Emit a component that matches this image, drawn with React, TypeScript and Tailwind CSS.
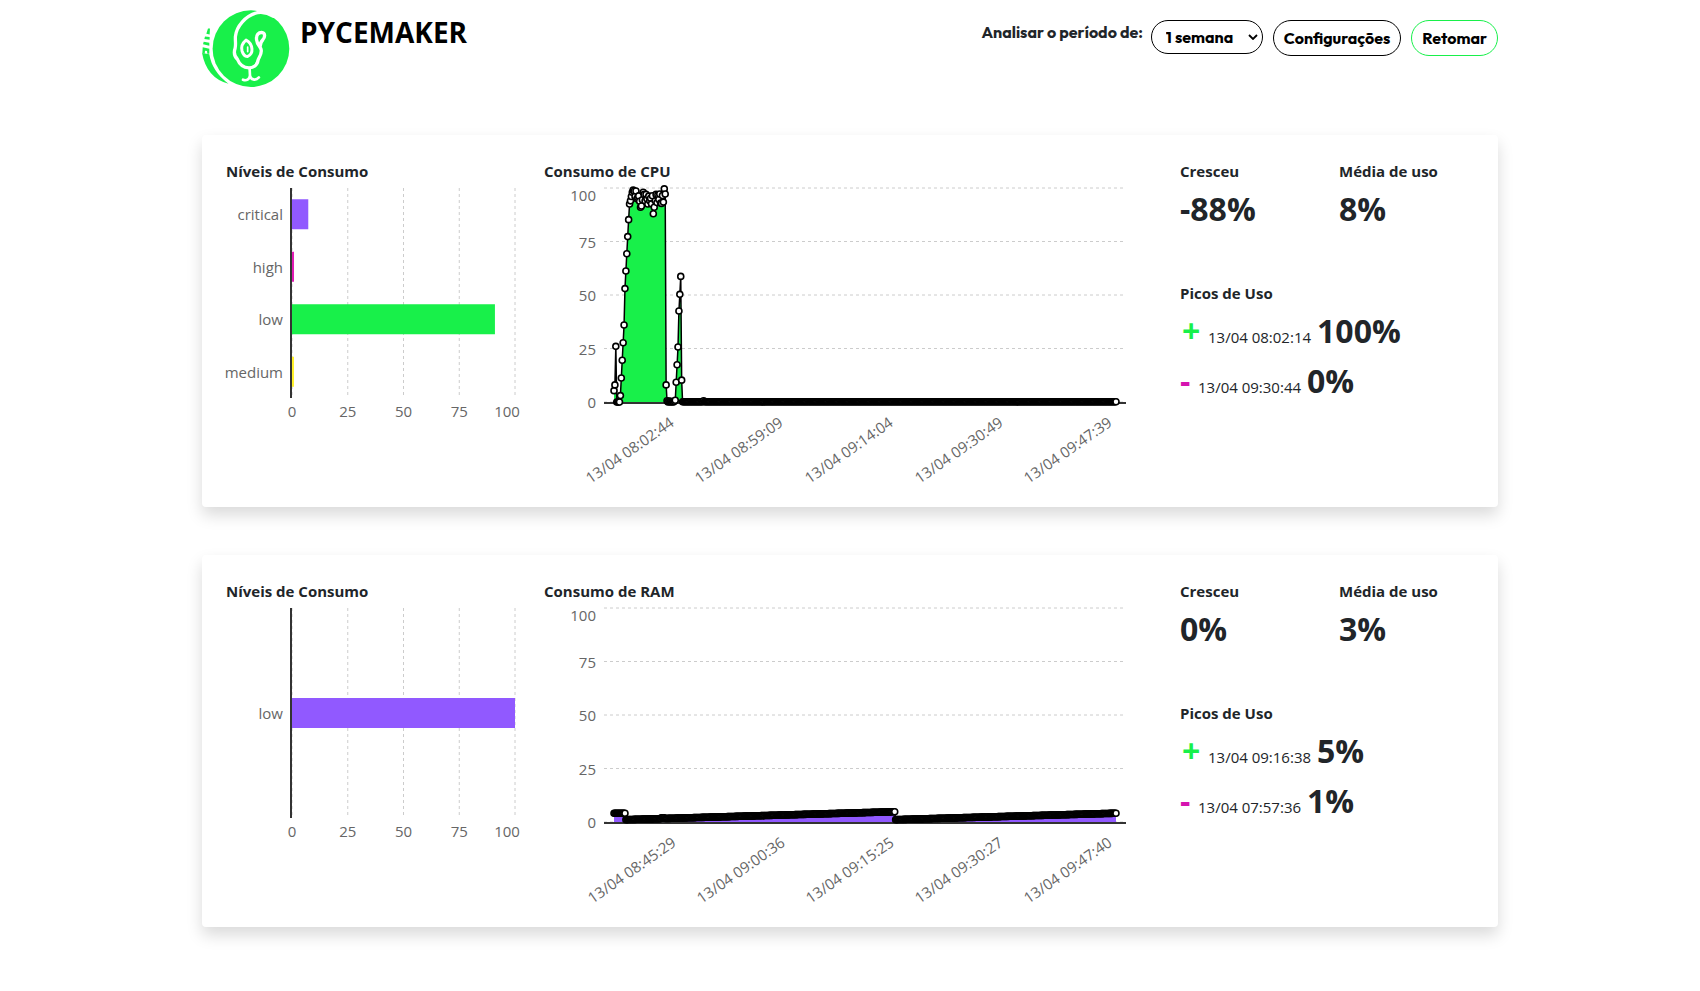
import React from "react";

type Point = [number, number];

interface Bar {
  label: string;
  value: number;
  color: string;
}

interface Resource {
  title: string;
  color: string;
  levels: Bar[];
  points: Point[];
  ticks: { label: string; x: number }[];
  growth: string;
  average: string;
  max: { at: string; value: string };
  min: { at: string; value: string };
}

const FIRST_X = 70;
const LAST_X = 572;
const ZERO_Y = 219;
const PLOT_HEIGHT = 214;
const SAMPLES = 550;

const sampleX = (i: number) => FIRST_X + ((LAST_X - FIRST_X) * i) / (SAMPLES - 1);

const cpuStart = [
  5.3, 8, 26, 0, 0, 0, 0, 3, 11.2, 19.5, 27.7, 36, 53, 61.2, 69.3, 77.3,
  85.2, 92.5, 94, 96, 98, 99, 98.5, 96, 98.6, 95, 95.5, 96.3, 93.8, 91, 91.6,
  94.5, 98, 97, 94, 97, 95, 92.5, 96.2, 94, 95.2, 92.6, 96.4, 88, 91, 94, 97,
  93.2, 96.8, 94.6, 97.2, 93, 92.8, 96.5, 93.4, 99.6, 97.2, 8, 0.6, 0, 0.4, 0,
  0.3, 0, 0.2, 0, 0.3, 0.8, 9.2, 17.4, 25.7, 42.5, 50.3, 58.7, 10.2,
];

const cpuPoints = Array.from({ length: SAMPLES }, (_, i): Point => [
  sampleX(i),
  i < cpuStart.length ? cpuStart[i] : i === 98 ? 0.6 : 0.1,
]);

const ramPoints = Array.from({ length: SAMPLES }, (_, i): Point => {
  const x = sampleX(i);
  if (i <= 12) return [x, 4.1];
  if (i >= 52 && i <= 55) return [x, 2];
  if (i <= 307) return [x, 1.1 + (3.7 * (i - 13)) / 294];
  return [x, 1.1 + (3 * (i - 308)) / (SAMPLES - 309)];
});

const resources: Resource[] = [
  {
    title: "Consumo de CPU",
    color: "#18f04a",
    levels: [
      { label: "critical", value: 7.3, color: "#9159ff" },
      { label: "high", value: 0.9, color: "#e01bb4" },
      { label: "low", value: 91, color: "#18f04a" },
      { label: "medium", value: 0.9, color: "#fff12b" },
    ],
    points: cpuPoints,
    ticks: [
      { label: "13/04 08:02:44", x: 131 },
      { label: "13/04 08:59:09", x: 240 },
      { label: "13/04 09:14:04", x: 350 },
      { label: "13/04 09:30:49", x: 460 },
      { label: "13/04 09:47:39", x: 569 },
    ],
    growth: "-88%",
    average: "8%",
    max: { at: "13/04 08:02:14", value: "100%" },
    min: { at: "13/04 09:30:44", value: "0%" },
  },
  {
    title: "Consumo de RAM",
    color: "#9159ff",
    levels: [{ label: "low", value: 100, color: "#9159ff" }],
    points: ramPoints,
    ticks: [
      { label: "13/04 08:45:29", x: 133 },
      { label: "13/04 09:00:36", x: 242 },
      { label: "13/04 09:15:25", x: 351 },
      { label: "13/04 09:30:27", x: 460 },
      { label: "13/04 09:47:40", x: 569 },
    ],
    growth: "0%",
    average: "3%",
    max: { at: "13/04 09:16:38", value: "5%" },
    min: { at: "13/04 07:57:36", value: "1%" },
  },
];

const percents = [0, 25, 50, 75, 100];

function Logo() {
  return (
    <svg viewBox="36 28 266 236" className="h-[78px] w-[88px] shrink-0" role="img" aria-label="Pycemaker">
      <path d="M36 158 L58 162 Q66 214 116 251 Q50 234 36 158Z" fill="#18f04a" />
      <path
        d="M54 84 L60 84 L59 102 L49 100Z M45 108 L59 110 L59 118 L43 116Z M41 124 L58 127 L58 136 L39 132Z M38 141 L58 145 L58 160 L52 160 L51 152 L45 151 L44 160 L37 158Z"
        fill="#18f04a"
      />
      <circle cx="184" cy="145" r="116" fill="#18f04a" />
      <g fill="none" stroke="#fff" strokeLinecap="round" strokeLinejoin="round">
        <path
          d="M252 47 Q228 32 204 36 C166 46 140 78 137 108 C136 122 139 132 136 144 C131 158 134 168 143 177 C148 190 156 202 178 203 C198 202 204 192 206 178 C209 170 217 162 215 149 C213 138 203 136 201 118 C199 102 208 96 216 96 C228 97 227 110 220 118 C213 125 211 132 212 142"
          strokeWidth="10"
        />
        <path d="M169 119 C158 128 154 140 157 152 C160 162 166 168 173 169 C183 165 188 157 187 146 C186 134 179 124 169 119Z" strokeWidth="9" />
        <path d="M174 154 L174 140" strokeWidth="5" />
        <path d="M180 206 L181 226 C180 238 170 243 160 239 M181 226 C183 239 198 243 208 232" strokeWidth="8" />
      </g>
    </svg>
  );
}

function LevelsChart({ levels }: { levels: Bar[] }) {
  const band = 210 / levels.length;
  const x = (value: number) => 66 + value * 2.23;
  return (
    <svg viewBox="0 0 294 250" className="block w-full overflow-visible text-[15px]" role="img" aria-label="Níveis de Consumo">
      {percents.map((p) => (
        <line key={p} x1={x(p)} x2={x(p)} y1="5" y2="215" stroke="#ccc" strokeDasharray="3 3" />
      ))}
      {levels.map((level, i) => (
        <g key={level.label}>
          <rect x="66" y={5 + band * (i + 0.5) - 15} width={level.value * 2.23} height="30" fill={level.color} />
          <text x="57" y={5 + band * (i + 0.5) + 6} textAnchor="end" fill="#666">
            {level.label}
          </text>
        </g>
      ))}
      <line x1="65" x2="65" y1="5" y2="215" stroke="#333" strokeWidth="2" />
      {percents.map((p) => (
        <text key={p} x={Math.min(x(p), 281)} y="234" textAnchor="middle" fill="#666">
          {p}
        </text>
      ))}
    </svg>
  );
}

function UsageChart({ title, points, color, ticks }: Pick<Resource, "title" | "points" | "color" | "ticks">) {
  const y = (value: number) => ZERO_Y - (value * PLOT_HEIGHT) / 100;
  const line = points.map(([px, v]) => `${px.toFixed(2)},${y(v).toFixed(2)}`).join(" ");
  return (
    <svg viewBox="0 0 612 300" className="block w-full overflow-visible text-[15px]" role="img" aria-label={title}>
      {percents.map((p) => (
        <g key={p}>
          <line x1="60" x2="582" y1={y(p)} y2={y(p)} stroke="#ccc" strokeDasharray="3 3" />
          <text x="52" y={Math.max(y(p), 12) + 6} textAnchor="end" fill="#666">
            {p}
          </text>
        </g>
      ))}
      <line x1="60" x2="582" y1="220" y2="220" stroke="#333" strokeWidth="2" />
      <polygon points={`${FIRST_X},${ZERO_Y} ${line} ${LAST_X},${ZERO_Y}`} fill={color} />
      <polyline points={line} fill="none" stroke="#000" strokeWidth="1.5" />
      {points.map(([px, v], i) => (
        <circle key={i} cx={px} cy={y(v)} r="3" fill="#fff" stroke="#000" strokeWidth="1.6" />
      ))}
      {ticks.map(({ label, x }) => (
        <text key={label} x={x} y="242" textAnchor="end" fill="#666" transform={`rotate(-35 ${x} 242)`}>
          {label}
        </text>
      ))}
    </svg>
  );
}

function Peak({ sign, signClass, at, value }: { sign: string; signClass: string; at: string; value: string }) {
  return (
    <p className="flex h-[50px] items-baseline leading-[52px]">
      <span className={signClass}>{sign}</span>
      <span className="text-[15px]">{at}</span>
      <span className="ml-1.5 text-[32px] font-bold">{value}</span>
    </p>
  );
}

function ResourceCard({ resource }: { resource: Resource }) {
  return (
    <section className="grid grid-cols-12 gap-6 rounded bg-white p-6 shadow-[0_8px_16px_rgba(0,0,0,0.15)]">
      <div className="col-span-3">
        <h2 className="text-[15px] leading-6 font-bold">Níveis de Consumo</h2>
        <LevelsChart levels={resource.levels} />
      </div>
      <div className="col-span-6">
        <h2 className="text-[15px] leading-6 font-bold">{resource.title}</h2>
        <UsageChart title={resource.title} points={resource.points} color={resource.color} ticks={resource.ticks} />
      </div>
      <div className="col-span-3">
        <div className="grid grid-cols-2 gap-6">
          <div>
            <h2 className="text-[15px] leading-6 font-bold">Cresceu</h2>
            <p className="text-[32px] leading-[52px] font-bold">{resource.growth}</p>
          </div>
          <div>
            <h2 className="text-[15px] leading-6 font-bold">Média de uso</h2>
            <p className="text-[32px] leading-[52px] font-bold">{resource.average}</p>
          </div>
        </div>
        <h2 className="mt-[46px] text-[15px] leading-6 font-bold">Picos de Uso</h2>
        <Peak sign="+" signClass="w-7 pl-0.5 text-[32px] font-bold text-[#18f04a]" {...resource.max} />
        <Peak sign="-" signClass="w-[18px] text-[32px] font-bold text-[#d614b0]" {...resource.min} />
      </div>
    </section>
  );
}

export default function App() {
  return (
    <div className="min-h-screen bg-white font-['Open_Sans','Noto_Sans',sans-serif] text-[#212529]">
      <div className="mx-auto max-w-[1320px] px-3 pb-16">
        <header className="flex items-start justify-between pt-2.5">
          <div className="flex items-start gap-2.5">
            <Logo />
            <h1 className="text-[28px] leading-11 font-bold text-black">PYCEMAKER</h1>
          </div>
          <div className="flex items-start gap-2.5 pt-2.5 font-['Outfit','Lato',sans-serif] text-base font-bold">
            <div className="flex items-start gap-2">
              <label htmlFor="period" className="leading-6">
                Analisar o período de:
              </label>
              <div className="relative">
                <select
                  id="period"
                  defaultValue="1 semana"
                  className="h-[34px] w-28 appearance-none rounded-full border border-black bg-white pl-[14px] text-black"
                >
                  <option>1 dia</option>
                  <option>1 semana</option>
                  <option>1 mês</option>
                </select>
                <svg viewBox="0 0 10 6" className="pointer-events-none absolute top-[14px] right-[5px] w-2.5" aria-hidden="true">
                  <path d="M1 1l4 4 4-4" fill="none" stroke="#000" strokeWidth="1.8" />
                </svg>
              </div>
            </div>
            <button type="button" className="h-9 rounded-full border border-black px-2.5 text-black">
              Configurações
            </button>
            <button type="button" className="h-9 rounded-full border border-[#18f04a] px-2.5 text-black">
              Retomar
            </button>
          </div>
        </header>
        <main className="mt-[47px] flex flex-col gap-12">
          {resources.map((resource) => (
            <ResourceCard key={resource.title} resource={resource} />
          ))}
        </main>
      </div>
    </div>
  );
}
